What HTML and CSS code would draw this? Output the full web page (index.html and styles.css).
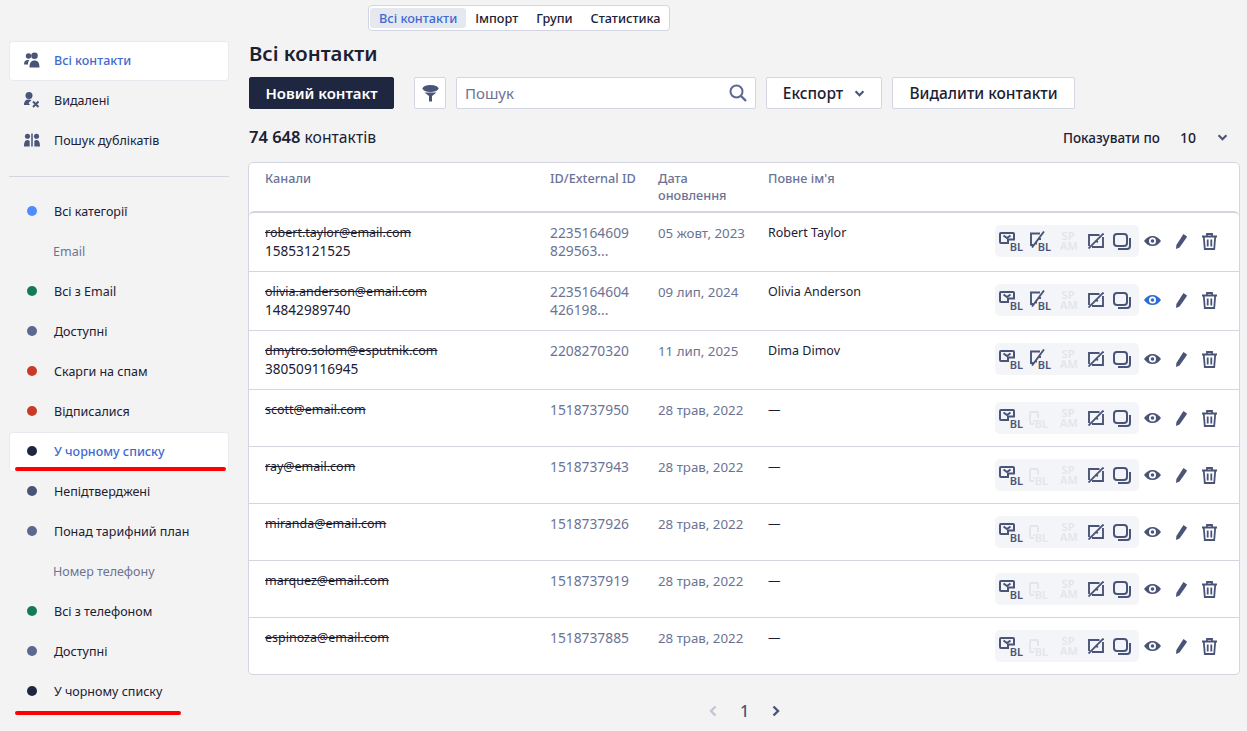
FILE: index.html
```html
<!DOCTYPE html>
<html lang="uk">
<head>
    <meta charset="UTF-8">
    <meta name="viewport" content="width=device-width, initial-scale=1.0">
    <title>Всі контакти</title>
    <link rel="stylesheet" href="styles.css">
</head>
<body>
    <svg class="sprite" width="0" height="0">
        <symbol id="i-mail" viewBox="0 0 16 12">
            <path d="M2 1h12a1 1 0 0 1 1 1v5.500H9V11H2a1 1 0 0 1-1-1V2a1 1 0 0 1 1-1z" fill="none" stroke="currentColor" stroke-width="2"/>
            <path d="M4.500 3.500 8 6l3.500-2.500" fill="none" stroke="currentColor" stroke-width="2"/>
        </symbol>
        <symbol id="i-phone" viewBox="0 0 10 14">
            <path d="M9 7V2a1 1 0 0 0-1-1H2a1 1 0 0 0-1 1v10a1 1 0 0 0 1 1h3" fill="none" stroke="currentColor" stroke-width="1.800"/>
            <path d="M4 10h1.500" stroke="currentColor" stroke-width="1.800"/>
        </symbol>
        <symbol id="i-slash" viewBox="0 0 16 17">
            <path d="M11 2.500H2V14h2M11 7v2" fill="none" stroke="currentColor" stroke-width="1.900"/>
            <path d="M15 .5 3 16.500" stroke="currentColor" stroke-width="1.900"/>
            <path d="M6.500 12.500h1.500" stroke="currentColor" stroke-width="1.900"/>
        </symbol>
        <symbol id="i-picture" viewBox="0 0 16 16">
            <path d="M11.500 2H1v11M4 14h11V4" fill="none" stroke="currentColor" stroke-width="1.900"/>
            <path d="M15.500 .5.500 15.500" stroke="currentColor" stroke-width="1.900"/>
            <path d="M8 7.500l1.800 1.800" stroke="currentColor" stroke-width="1.900"/>
        </symbol>
        <symbol id="i-copy" viewBox="0 0 18 17">
            <rect x="1" y="1" width="13" height="12" rx="3" fill="none" stroke="currentColor" stroke-width="2"/>
            <path d="M17 5v8a3 3 0 0 1-3 3H5" fill="none" stroke="currentColor" stroke-width="2"/>
        </symbol>
        <symbol id="i-eye" viewBox="0 0 17 10">
            <path fill-rule="evenodd" d="M8.500 0c3.500 0 6.500 2 8.500 5-2 3-5 5-8.500 5S2 8 0 5c2-3 5-5 8.500-5zm0 1.500a3.500 3.500 0 1 0 0 7 3.500 3.500 0 0 0 0-7zm0 1.700a1.800 1.800 0 1 1 0 3.600 1.800 1.800 0 0 1 0-3.600z"/>
        </symbol>
        <symbol id="i-pencil" viewBox="0 0 11 15">
            <path d="M7.500 0 11 2.500 10.300 4 3.500 13.500 0 15 .4 11l6.400-10z"/>
        </symbol>
        <symbol id="i-trash" viewBox="0 0 15 17">
            <path d="M5 3V1h5v2M0 3.500h15M1.800 4l1 12h9.400l1-12M5.700 6.500V13.500M9.300 6.500V13.500" fill="none" stroke="currentColor" stroke-width="1.800"/>
        </symbol>
        <symbol id="i-chevron" viewBox="0 0 12 8">
            <path d="M1.500 1.500 6 6l4.500-4.500" fill="none" stroke="currentColor" stroke-width="2.400"/>
        </symbol>
    </svg>

    <nav class="tabs">
        <a class="tab active">Всі контакти</a>
        <a class="tab">Імпорт</a>
        <a class="tab">Групи</a>
        <a class="tab">Статистика</a>
    </nav>

    <div class="layout">
        <aside class="sidebar">
            <a class="side-item active">
                <svg class="side-icon" viewBox="0 0 16 15"><circle cx="4.500" cy="3.500" r="2.700"/><circle cx="10.500" cy="3.300" r="3.300"/><path d="M0 12c0-3 1-4.500 4-4.500.6 0 1 .1 1.300.2C4.400 8.800 4 10 4 11.500V12zM5.500 15c0-4.500 1.500-7 5-7s5 2.500 5 7z"/></svg>
                Всі контакти
            </a>
            <a class="side-item">
                <svg class="side-icon" viewBox="0 0 16 16"><circle cx="5" cy="3.500" r="3.500"/><path d="M0 13c0-3.500 1.500-5.500 5-5.500 1 0 2 .2 2.600.6L4.500 11l1.500 2z"/><path d="M9 9.500l5.500 5.500M14.500 9.500 9 15" stroke="#4a5478" stroke-width="2" fill="none"/></svg>
                Видалені
            </a>
            <a class="side-item">
                <svg class="side-icon" viewBox="0 0 17 14"><circle cx="3.700" cy="3" r="2.700"/><circle cx="13.300" cy="3" r="2.700"/><path d="M0 14c0-4 .8-7 3.700-7 1 0 1.800.4 2.300 1v6zM11 8c.5-.6 1.300-1 2.300-1 2.900 0 3.700 3 3.700 7h-6zM7.700 0h1.600v14H7.700z"/></svg>
                Пошук дублікатів
            </a>
            <hr class="side-divider">
            <a class="side-item"><span class="dot blue"></span>Всі категорії</a>
            <div class="side-title">Email</div>
            <a class="side-item"><span class="dot green"></span>Всі з Email</a>
            <a class="side-item"><span class="dot slate"></span>Доступні</a>
            <a class="side-item"><span class="dot red"></span>Скарги на спам</a>
            <a class="side-item"><span class="dot red"></span>Відписалися</a>
            <a class="side-item active marked"><span class="dot navy"></span>У чорному списку</a>
            <a class="side-item"><span class="dot steel"></span>Непідтверджені</a>
            <a class="side-item"><span class="dot slate"></span>Понад тарифний план</a>
            <div class="side-title">Номер телефону</div>
            <a class="side-item"><span class="dot green"></span>Всі з телефоном</a>
            <a class="side-item"><span class="dot slate"></span>Доступні</a>
            <a class="side-item marked short"><span class="dot navy"></span>У чорному списку</a>
        </aside>

        <main class="content">
            <h1 class="page-title">Всі контакти</h1>

            <div class="toolbar">
                <button class="btn btn-primary">Новий контакт</button>
                <button class="btn btn-filter">
                    <svg width="17" height="17" viewBox="0 0 17 17"><ellipse cx="8.500" cy="3.500" rx="8" ry="3.500"/><path d="M2.500 7.500h12L10 11v5.500H7V11z"/></svg>
                </button>
                <div class="search">
                    <span class="search-text">Пошук</span>
                    <svg width="18" height="18" viewBox="0 0 18 18"><circle cx="7.500" cy="7.500" r="6" fill="none" stroke="currentColor" stroke-width="2"/><path d="M12 12l5 5" stroke="currentColor" stroke-width="2.400"/></svg>
                </div>
                <button class="btn btn-export">Експорт <svg class="chevron"><use href="#i-chevron"/></svg></button>
                <button class="btn btn-delete">Видалити контакти</button>
            </div>

            <div class="summary">
                <div class="count"><b>74 648</b> контактів</div>
                <div class="per-page">
                    <span>Показувати по</span>
                    <span class="per-value">10</span>
                    <svg class="chevron"><use href="#i-chevron"/></svg>
                </div>
            </div>

            <section class="table">
                <div class="row head">
                    <div>Канали</div>
                    <div>ID/External ID</div>
                    <div class="wrap-head">Дата оновлення</div>
                    <div>Повне ім'я</div>
                </div>
                <div class="table-body">
                    <div class="row">
                        <div><s>robert.taylor@email.com</s><span class="phone">15853121525</span></div>
                        <div class="id">2235164609 829563...</div>
                        <div class="date">05 жовт, 2023</div>
                        <div>Robert Taylor</div>
                        <div class="actions">
                            <div class="status-group">
                                <span class="st st-mail"><svg><use href="#i-mail"/></svg><em>BL</em></span>
                                <span class="st st-slash"><svg><use href="#i-slash"/></svg><em>BL</em></span>
                                <span class="spam off">SP<br>AM</span>
                                <svg class="pic"><use href="#i-picture"/></svg>
                                <svg class="copy"><use href="#i-copy"/></svg>
                            </div>
                            <svg class="eye"><use href="#i-eye"/></svg>
                            <svg class="pencil"><use href="#i-pencil"/></svg>
                            <svg class="trash"><use href="#i-trash"/></svg>
                        </div>
                    </div>
                    <div class="row">
                        <div><s>olivia.anderson@email.com</s><span class="phone">14842989740</span></div>
                        <div class="id">2235164604 426198...</div>
                        <div class="date">09 лип, 2024</div>
                        <div>Olivia Anderson</div>
                        <div class="actions">
                            <div class="status-group">
                                <span class="st st-mail"><svg><use href="#i-mail"/></svg><em>BL</em></span>
                                <span class="st st-slash"><svg><use href="#i-slash"/></svg><em>BL</em></span>
                                <span class="spam off">SP<br>AM</span>
                                <svg class="pic"><use href="#i-picture"/></svg>
                                <svg class="copy"><use href="#i-copy"/></svg>
                            </div>
                            <svg class="eye on"><use href="#i-eye"/></svg>
                            <svg class="pencil"><use href="#i-pencil"/></svg>
                            <svg class="trash"><use href="#i-trash"/></svg>
                        </div>
                    </div>
                    <div class="row">
                        <div><s>dmytro.solom@esputnik.com</s><span class="phone">380509116945</span></div>
                        <div class="id">2208270320</div>
                        <div class="date">11 лип, 2025</div>
                        <div>Dima Dimov</div>
                        <div class="actions">
                            <div class="status-group">
                                <span class="st st-mail"><svg><use href="#i-mail"/></svg><em>BL</em></span>
                                <span class="st st-slash"><svg><use href="#i-slash"/></svg><em>BL</em></span>
                                <span class="spam off">SP<br>AM</span>
                                <svg class="pic"><use href="#i-picture"/></svg>
                                <svg class="copy"><use href="#i-copy"/></svg>
                            </div>
                            <svg class="eye"><use href="#i-eye"/></svg>
                            <svg class="pencil"><use href="#i-pencil"/></svg>
                            <svg class="trash"><use href="#i-trash"/></svg>
                        </div>
                    </div>
                    <div class="row">
                        <div><s>scott@email.com</s></div>
                        <div class="id">1518737950</div>
                        <div class="date">28 трав, 2022</div>
                        <div>—</div>
                        <div class="actions">
                            <div class="status-group">
                                <span class="st st-mail"><svg><use href="#i-mail"/></svg><em>BL</em></span>
                                <span class="st st-phone off"><svg><use href="#i-phone"/></svg><em>BL</em></span>
                                <span class="spam off">SP<br>AM</span>
                                <svg class="pic"><use href="#i-picture"/></svg>
                                <svg class="copy"><use href="#i-copy"/></svg>
                            </div>
                            <svg class="eye"><use href="#i-eye"/></svg>
                            <svg class="pencil"><use href="#i-pencil"/></svg>
                            <svg class="trash"><use href="#i-trash"/></svg>
                        </div>
                    </div>
                    <div class="row">
                        <div><s>ray@email.com</s></div>
                        <div class="id">1518737943</div>
                        <div class="date">28 трав, 2022</div>
                        <div>—</div>
                        <div class="actions">
                            <div class="status-group">
                                <span class="st st-mail"><svg><use href="#i-mail"/></svg><em>BL</em></span>
                                <span class="st st-phone off"><svg><use href="#i-phone"/></svg><em>BL</em></span>
                                <span class="spam off">SP<br>AM</span>
                                <svg class="pic"><use href="#i-picture"/></svg>
                                <svg class="copy"><use href="#i-copy"/></svg>
                            </div>
                            <svg class="eye"><use href="#i-eye"/></svg>
                            <svg class="pencil"><use href="#i-pencil"/></svg>
                            <svg class="trash"><use href="#i-trash"/></svg>
                        </div>
                    </div>
                    <div class="row">
                        <div><s>miranda@email.com</s></div>
                        <div class="id">1518737926</div>
                        <div class="date">28 трав, 2022</div>
                        <div>—</div>
                        <div class="actions">
                            <div class="status-group">
                                <span class="st st-mail"><svg><use href="#i-mail"/></svg><em>BL</em></span>
                                <span class="st st-phone off"><svg><use href="#i-phone"/></svg><em>BL</em></span>
                                <span class="spam off">SP<br>AM</span>
                                <svg class="pic"><use href="#i-picture"/></svg>
                                <svg class="copy"><use href="#i-copy"/></svg>
                            </div>
                            <svg class="eye"><use href="#i-eye"/></svg>
                            <svg class="pencil"><use href="#i-pencil"/></svg>
                            <svg class="trash"><use href="#i-trash"/></svg>
                        </div>
                    </div>
                    <div class="row">
                        <div><s>marquez@email.com</s></div>
                        <div class="id">1518737919</div>
                        <div class="date">28 трав, 2022</div>
                        <div>—</div>
                        <div class="actions">
                            <div class="status-group">
                                <span class="st st-mail"><svg><use href="#i-mail"/></svg><em>BL</em></span>
                                <span class="st st-phone off"><svg><use href="#i-phone"/></svg><em>BL</em></span>
                                <span class="spam off">SP<br>AM</span>
                                <svg class="pic"><use href="#i-picture"/></svg>
                                <svg class="copy"><use href="#i-copy"/></svg>
                            </div>
                            <svg class="eye"><use href="#i-eye"/></svg>
                            <svg class="pencil"><use href="#i-pencil"/></svg>
                            <svg class="trash"><use href="#i-trash"/></svg>
                        </div>
                    </div>
                    <div class="row">
                        <div><s>espinoza@email.com</s></div>
                        <div class="id">1518737885</div>
                        <div class="date">28 трав, 2022</div>
                        <div>—</div>
                        <div class="actions">
                            <div class="status-group">
                                <span class="st st-mail"><svg><use href="#i-mail"/></svg><em>BL</em></span>
                                <span class="st st-phone off"><svg><use href="#i-phone"/></svg><em>BL</em></span>
                                <span class="spam off">SP<br>AM</span>
                                <svg class="pic"><use href="#i-picture"/></svg>
                                <svg class="copy"><use href="#i-copy"/></svg>
                            </div>
                            <svg class="eye"><use href="#i-eye"/></svg>
                            <svg class="pencil"><use href="#i-pencil"/></svg>
                            <svg class="trash"><use href="#i-trash"/></svg>
                        </div>
                    </div>
                </div>
            </section>

            <div class="pager">
                <svg class="prev" width="8" height="12" viewBox="0 0 8 12"><path d="M6.500 1.500 2 6l4.500 4.500" fill="none" stroke="currentColor" stroke-width="2.400"/></svg>
                <span class="page-num">1</span>
                <svg class="next" width="8" height="12" viewBox="0 0 8 12"><path d="M1.500 1.500 6 6l-4.500 4.500" fill="none" stroke="currentColor" stroke-width="2.400"/></svg>
            </div>
        </main>
    </div>
</body>
</html>
```

FILE: styles.css
```css
* {
    box-sizing: border-box;
}

body {
    margin: 0;
    height: 731px;
    overflow: hidden;
    background: #f3f3f3;
    color: #1b2033;
    font-family: "Noto Sans", "Liberation Sans", sans-serif;
    font-size: 13px;
}

.sprite {
    position: absolute;
}

/* Top tabs */
.tabs {
    display: flex;
    width: 302px;
    height: 26px;
    margin: 5px 0 0 368px;
    padding: 2px 1px;
    background: #fff;
    border: 1px solid #d3d6e2;
    border-radius: 4px;
}

.tab {
    display: flex;
    align-items: center;
    padding: 0 9px;
    border-radius: 3px;
    font-weight: 500;
    font-size: 12.7px;
    white-space: nowrap;
}

.tab.active {
    color: #3f6bd0;
    background: #e6e8f0;
}

.layout {
    display: flex;
    margin-top: 10px;
    padding-left: 9px;
}

/* Sidebar */
.sidebar {
    width: 220px;
    flex-shrink: 0;
}

.side-item {
    position: relative;
    display: flex;
    align-items: center;
    height: 40px;
    padding: 0 0 2px 15px;
    border-radius: 4px;
    font-size: 12.5px;
}

.side-item.active {
    color: #3f6bd0;
    font-weight: 500;
    background: #fff;
    box-shadow: 0 0 0 1px #e9eaf0 inset;
}

.side-icon {
    width: 16px;
    height: 16px;
    margin-right: 14px;
    fill: #4a5478;
}

.side-divider {
    height: 1px;
    margin: 15px 0;
    border: 0;
    background: #d3d6e2;
}

.side-title {
    display: flex;
    align-items: center;
    height: 40px;
    padding: 0 0 2px 44px;
    color: #6b7394;
    font-size: 12.5px;
}

.dot {
    width: 10px;
    height: 10px;
    margin: 0 17px 0 3px;
    border-radius: 50%;
}

.dot.blue { background: #4f8cff; }
.dot.green { background: #127a5a; }
.dot.slate { background: #5c6890; }
.dot.steel { background: #4a5478; }
.dot.red { background: #c93a28; }
.dot.navy { background: #1f2640; }

/* Red annotation lines lie over the sidebar items */
.marked::after {
    content: "";
    position: absolute;
    left: 6px;
    bottom: 1px;
    width: 211px;
    height: 4px;
    border-radius: 2px;
    background: #f00;
}

.marked.short::after {
    bottom: -3px;
    width: 166px;
}

/* Main column */
.content {
    width: 991px;
    margin-left: 20px;
}

.page-title {
    margin: -1px 0 0;
    height: 27px;
    font-size: 20.3px;
    line-height: 26px;
    font-weight: 600;
}

.toolbar {
    display: flex;
    gap: 10px;
    margin-top: 10px;
    height: 32px;
}

.btn {
    height: 32px;
    padding: 0;
    font-family: inherit;
    font-size: 15.5px;
    font-weight: 500;
    color: #1b2033;
    background: #fff;
    border: 1px solid #d3d6e2;
    border-radius: 2px;
}

.btn-primary {
    width: 145px;
    margin-right: 10px;
    color: #fff;
    font-size: 15px;
    font-weight: 600;
    background: #1f2640;
    border-color: #1f2640;
}

.btn-filter {
    display: flex;
    align-items: center;
    justify-content: center;
    width: 32px;
    fill: #4a5478;
}

.search {
    display: flex;
    align-items: center;
    justify-content: space-between;
    width: 300px;
    padding: 0 8px;
    color: #5d6892;
    background: #fff;
    border: 1px solid #d3d6e2;
    border-radius: 2px;
}

.search-text {
    font-size: 15px;
    color: #6b7394;
}

.btn-export {
    display: flex;
    align-items: center;
    justify-content: center;
    gap: 11px;
    width: 116px;
}

.btn-delete {
    width: 183px;
}

.chevron {
    width: 11px;
    height: 7px;
    color: #4a5478;
}

.summary {
    display: flex;
    align-items: center;
    justify-content: space-between;
    height: 20px;
    margin-top: 18px;
    padding-right: 12px;
}

.count {
    margin-top: -2px;
    font-size: 15.7px;
}

.count b {
    font-size: 16.5px;
    font-weight: 600;
}

.per-page {
    display: flex;
    align-items: center;
    padding-top: 1px;
    font-size: 13.5px;
    font-weight: 500;
}

.per-value {
    margin: 0 21px 0 20px;
    font-size: 14px;
}

/* Table */
.table {
    width: 992px;
    margin: 15px 0 0 -1px;
    background: #fff;
    border: 1px solid #d3d6e2;
    border-radius: 5px;
}

.row {
    display: grid;
    grid-template-columns: 285px 108px 110px 1fr auto;
    padding: 11px 22px 11px 16px;
    border-top: 1px solid #d3d6e2;
    font-size: 12.5px;
    line-height: 18px;
}

.row.head {
    height: 48px;
    padding-top: 7px;
    border-top: 0;
    font-size: 12.7px;
    font-weight: 500;
    line-height: 17px;
    color: #6b7394;
}

.wrap-head {
    padding-right: 30px;
}

.table-body {
    border-top: 2px solid #d3d6e2;
    border-radius: 5px 5px 0 0;
}

.table-body .row:first-child {
    border-top: 0;
}

.phone {
    display: block;
    font-size: 13.6px;
}

.id {
    padding-right: 20px;
    font-size: 13.8px;
    color: #6b7394;
}

.date {
    font-size: 13.3px;
    color: #6b7394;
}

s {
    display: block;
    text-decoration-thickness: 1px;
}

.actions {
    display: flex;
    align-items: center;
    height: 32px;
    margin: 1px 0;
    color: #4a5478;
    fill: #4a5478;
}

.status-group {
    display: flex;
    align-items: center;
    width: 144px;
    height: 32px;
    padding-left: 4px;
    margin-right: 5px;
    background: #f4f5f8;
    border-radius: 5px;
}

.st {
    position: relative;
    display: block;
    height: 18px;
}

.st svg {
    position: absolute;
    left: 0;
}

.st em {
    position: absolute;
    right: 0;
    bottom: -2px;
    font-style: normal;
    font-size: 11px;
    line-height: 11px;
    font-weight: 600;
}

.st-mail {
    width: 24px;
    margin-right: 6px;
}

.st-mail svg {
    top: 0;
    width: 16px;
    height: 12px;
}

.st-slash,
.st-phone {
    width: 22px;
    margin-right: 9px;
}

.st-slash svg {
    top: -1px;
    width: 16px;
    height: 17px;
}

.st-phone svg {
    top: 2px;
    width: 10px;
    height: 14px;
}

.st-phone em {
    right: 3px;
}

.off {
    color: #e3e5ea;
}

.spam {
    width: 16px;
    margin-right: 12px;
    font-size: 11px;
    line-height: 10px;
    font-weight: 600;
    text-align: center;
}

.pic {
    width: 16px;
    height: 16px;
    margin-right: 9px;
}

.copy {
    width: 18px;
    height: 17px;
}

.eye {
    width: 17px;
    height: 10px;
    margin-right: 15px;
}

.eye.on {
    color: #2f6bd0;
    fill: #2f6bd0;
}

.pencil {
    width: 11px;
    height: 15px;
    margin-right: 15px;
}

.trash {
    width: 15px;
    height: 17px;
}

.pager {
    display: flex;
    align-items: center;
    justify-content: center;
    height: 20px;
    margin-top: 26px;
    color: #4a5478;
}

.prev {
    color: #c2c6d4;
}

.page-num {
    width: 55px;
    text-align: center;
    font-size: 16px;
    font-weight: 500;
}
```
